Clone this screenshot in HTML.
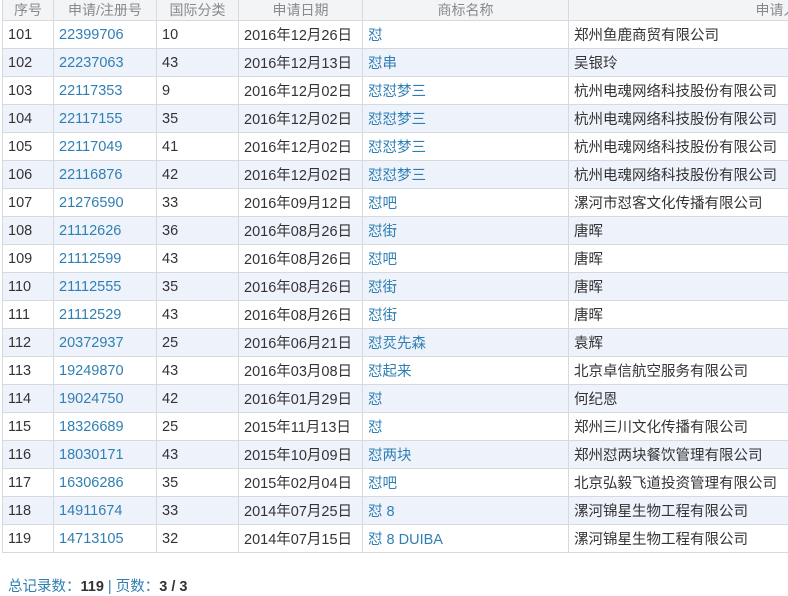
<!DOCTYPE html>
<html><head><meta charset="utf-8"><style>
html,body{margin:0;padding:0;background:#fff;width:788px;height:595px;overflow:hidden}
body{font-family:"Liberation Sans","Noto Sans CJK SC",sans-serif;font-size:14.5px;color:#333}
table{position:absolute;left:2px;top:-1px;border-collapse:collapse;table-layout:fixed;width:1010px}
td,th{border:1px solid #d6d9de;height:27px;padding:0 0 0 5px;white-space:nowrap;overflow:hidden;text-align:left;font-weight:normal}
th{height:20px;background:#f3f4f6;color:#8a8a8a;text-align:center;padding:0;font-size:14px}
tr:nth-child(odd) td{background:#eef3fb}
a{color:#2f7fb3;text-decoration:none}
.f{position:absolute;left:8px;top:575px;font-size:14.5px;color:#2f7fb3}
.f b{color:#333}
</style></head><body>
<table>
<colgroup><col style="width:51px"><col style="width:103px"><col style="width:82px"><col style="width:124px"><col style="width:206px"><col style="width:444px"></colgroup>
<tr><th>序号</th><th>申请/注册号</th><th>国际分类</th><th>申请日期</th><th>商标名称</th><th>申请人名称</th></tr>
<tr><td>101</td><td><a>22399706</a></td><td>10</td><td>2016年12月26日</td><td><a>怼</a></td><td>郑州鱼鹿商贸有限公司</td></tr>
<tr><td>102</td><td><a>22237063</a></td><td>43</td><td>2016年12月13日</td><td><a>怼串</a></td><td>吴银玲</td></tr>
<tr><td>103</td><td><a>22117353</a></td><td>9</td><td>2016年12月02日</td><td><a>怼怼梦三</a></td><td>杭州电魂网络科技股份有限公司</td></tr>
<tr><td>104</td><td><a>22117155</a></td><td>35</td><td>2016年12月02日</td><td><a>怼怼梦三</a></td><td>杭州电魂网络科技股份有限公司</td></tr>
<tr><td>105</td><td><a>22117049</a></td><td>41</td><td>2016年12月02日</td><td><a>怼怼梦三</a></td><td>杭州电魂网络科技股份有限公司</td></tr>
<tr><td>106</td><td><a>22116876</a></td><td>42</td><td>2016年12月02日</td><td><a>怼怼梦三</a></td><td>杭州电魂网络科技股份有限公司</td></tr>
<tr><td>107</td><td><a>21276590</a></td><td>33</td><td>2016年09月12日</td><td><a>怼吧</a></td><td>漯河市怼客文化传播有限公司</td></tr>
<tr><td>108</td><td><a>21112626</a></td><td>36</td><td>2016年08月26日</td><td><a>怼街</a></td><td>唐晖</td></tr>
<tr><td>109</td><td><a>21112599</a></td><td>43</td><td>2016年08月26日</td><td><a>怼吧</a></td><td>唐晖</td></tr>
<tr><td>110</td><td><a>21112555</a></td><td>35</td><td>2016年08月26日</td><td><a>怼街</a></td><td>唐晖</td></tr>
<tr><td>111</td><td><a>21112529</a></td><td>43</td><td>2016年08月26日</td><td><a>怼街</a></td><td>唐晖</td></tr>
<tr><td>112</td><td><a>20372937</a></td><td>25</td><td>2016年06月21日</td><td><a>怼烎先森</a></td><td>袁辉</td></tr>
<tr><td>113</td><td><a>19249870</a></td><td>43</td><td>2016年03月08日</td><td><a>怼起来</a></td><td>北京卓信航空服务有限公司</td></tr>
<tr><td>114</td><td><a>19024750</a></td><td>42</td><td>2016年01月29日</td><td><a>怼</a></td><td>何纪恩</td></tr>
<tr><td>115</td><td><a>18326689</a></td><td>25</td><td>2015年11月13日</td><td><a>怼</a></td><td>郑州三川文化传播有限公司</td></tr>
<tr><td>116</td><td><a>18030171</a></td><td>43</td><td>2015年10月09日</td><td><a>怼两块</a></td><td>郑州怼两块餐饮管理有限公司</td></tr>
<tr><td>117</td><td><a>16306286</a></td><td>35</td><td>2015年02月04日</td><td><a>怼吧</a></td><td>北京弘毅飞道投资管理有限公司</td></tr>
<tr><td>118</td><td><a>14911674</a></td><td>33</td><td>2014年07月25日</td><td><a>怼 8</a></td><td>漯河锦星生物工程有限公司</td></tr>
<tr><td>119</td><td><a>14713105</a></td><td>32</td><td>2014年07月15日</td><td><a>怼 8 DUIBA</a></td><td>漯河锦星生物工程有限公司</td></tr>
</table>
<div class="f">总记录数：<b>119</b> | 页数：<b>3 / 3</b></div>
</body></html>
